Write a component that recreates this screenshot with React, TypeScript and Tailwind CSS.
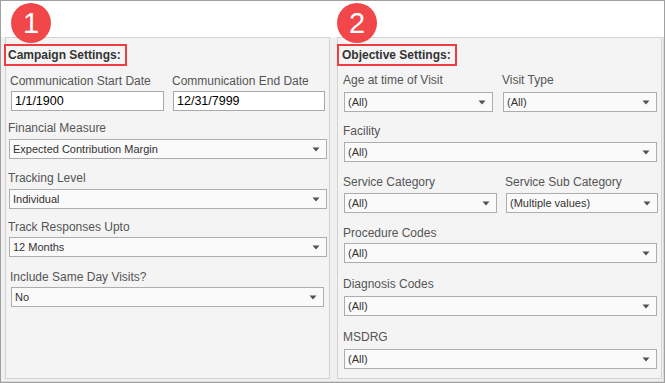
import { ReactNode } from "react";

/* ───────── small pieces ───────── */
function Caret() {
  return (
    <svg width="8" height="5" viewBox="0 0 8 5" className="shrink-0">
      <path d="M0.5 0.5 H7.5 L4 4.5 Z" fill="#505050" />
    </svg>
  );
}

function Select({ value, className = "" }: { value: string; className?: string }) {
  return (
    <div
      className={`flex h-[20px] items-center justify-between border border-[#adadad] bg-[#fafafa] pl-[3px] pr-[6px] text-[11px] text-[#333] ${className}`}
    >
      <span className="truncate leading-none">{value}</span>
      <Caret />
    </div>
  );
}

function DateInput({ value, className = "" }: { value: string; className?: string }) {
  return (
    <div
      className={`flex h-[20px] items-center border border-[#a9a9a9] bg-white pl-[3px] text-[12.5px] text-black ${className}`}
    >
      <span className="leading-none">{value}</span>
    </div>
  );
}

function Label({ children, className = "" }: { children: ReactNode; className?: string }) {
  return (
    <div className={`h-[14px] whitespace-nowrap text-[12px] leading-[14px] text-[#555] ${className}`}>
      {children}
    </div>
  );
}

function Heading({ children, className = "" }: { children: ReactNode; className?: string }) {
  return (
    <div
      className={`flex h-[22px] w-fit items-center border-2 border-[#ee3d40] pl-[2px] pr-[4px] text-[12px] font-bold text-[#333] ${className}`}
    >
      {children}
    </div>
  );
}

function Badge({ n, className = "" }: { n: string; className?: string }) {
  return (
    <div
      className={`absolute top-[2px] flex h-[40px] w-[40px] items-center justify-center rounded-full bg-[#f1474a] pt-[1px] text-[29px] leading-none text-white ${className}`}
    >
      {n}
    </div>
  );
}

/* ───────── panels ───────── */
function CampaignPanel() {
  return (
    <div className="flex h-[342px] w-[325px] flex-col border border-[#d2d2d2] bg-[#f4f4f4]">
      <Heading className="-ml-[2px] mt-[6px]">Campaign Settings:</Heading>

      <div className="mt-[8px] flex">
        <div className="w-[167px] pl-[4px]">
          <Label>Communication Start Date</Label>
          <DateInput value="1/1/1900" className="mt-[3px] ml-[1px] w-[153px]" />
        </div>
        <div className="w-[152px]">
          <Label className="-ml-[1px]">Communication End Date</Label>
          <DateInput value="12/31/7999" className="mt-[3px] w-[152px]" />
        </div>
      </div>

      <div className="mt-[10px] pl-[2px]">
        <Label>Financial Measure</Label>
        <Select value="Expected Contribution Margin" className="mt-[4px] ml-[1px] w-[318px]" />
      </div>

      <div className="mt-[12px] pl-[2px]">
        <Label>Tracking Level</Label>
        <Select value="Individual" className="mt-[4px] ml-[1px] w-[318px]" />
      </div>

      <div className="mt-[11px] pl-[2px]">
        <Label>Track Responses Upto</Label>
        <Select value="12 Months" className="mt-[3px] ml-[1px] w-[318px]" />
      </div>

      <div className="mt-[13px] pl-[4px]">
        <Label>Include Same Day Visits?</Label>
        <Select value="No" className="mt-[3px] ml-[1px] w-[313px]" />
      </div>
    </div>
  );
}

function ObjectivePanel() {
  return (
    <div className="flex h-[342px] w-[325px] flex-col border border-[#d2d2d2] bg-[#f4f4f4]">
      <Heading className="-ml-[1px] mt-[6px] pl-[3px]">Objective Settings:</Heading>

      <div className="mt-[7px] flex pl-[5px]">
        <div className="w-[159px]">
          <Label>Age at time of Visit</Label>
          <Select value="(All)" className="mt-[5px] ml-[1px] w-[149px]" />
        </div>
        <div>
          <Label>Visit Type</Label>
          <Select value="(All)" className="mt-[5px] ml-[1px] w-[154px]" />
        </div>
      </div>

      <div className="mt-[12px] pl-[5px]">
        <Label>Facility</Label>
        <Select value="(All)" className="mt-[4px] ml-[1px] w-[313px]" />
      </div>

      <div className="mt-[13px] flex pl-[5px]">
        <div className="w-[162px]">
          <Label>Service Category</Label>
          <Select value="(All)" className="mt-[4px] ml-[1px] w-[153px]" />
        </div>
        <div>
          <Label>Service Sub Category</Label>
          <Select value="(Multiple values)" className="mt-[4px] ml-[1px] w-[152px]" />
        </div>
      </div>

      <div className="mt-[13px] pl-[5px]">
        <Label>Procedure Codes</Label>
        <Select value="(All)" className="mt-[3px] ml-[1px] w-[313px]" />
      </div>

      <div className="mt-[14px] pl-[5px]">
        <Label>Diagnosis Codes</Label>
        <Select value="(All)" className="mt-[5px] ml-[1px] w-[313px]" />
      </div>

      <div className="mt-[14px] pl-[5px]">
        <Label>MSDRG</Label>
        <Select value="(All)" className="mt-[5px] ml-[1px] w-[313px]" />
      </div>
    </div>
  );
}

export default function App() {
  return (
    <div
      className="relative h-[383px] w-[665px] overflow-hidden border border-[#a0a0a0] bg-white"
      style={{ fontFamily: '"Liberation Sans", Arial, sans-serif' }}
    >
      <div className="mt-[36px] flex h-[345px] gap-[7px] border-r border-b border-[#dadada] bg-[#f0f0f0] pl-[4px]">
        <CampaignPanel />
        <ObjectivePanel />
      </div>
      <Badge n="1" className="left-[10px]" />
      <Badge n="2" className="left-[336px]" />
    </div>
  );
}
